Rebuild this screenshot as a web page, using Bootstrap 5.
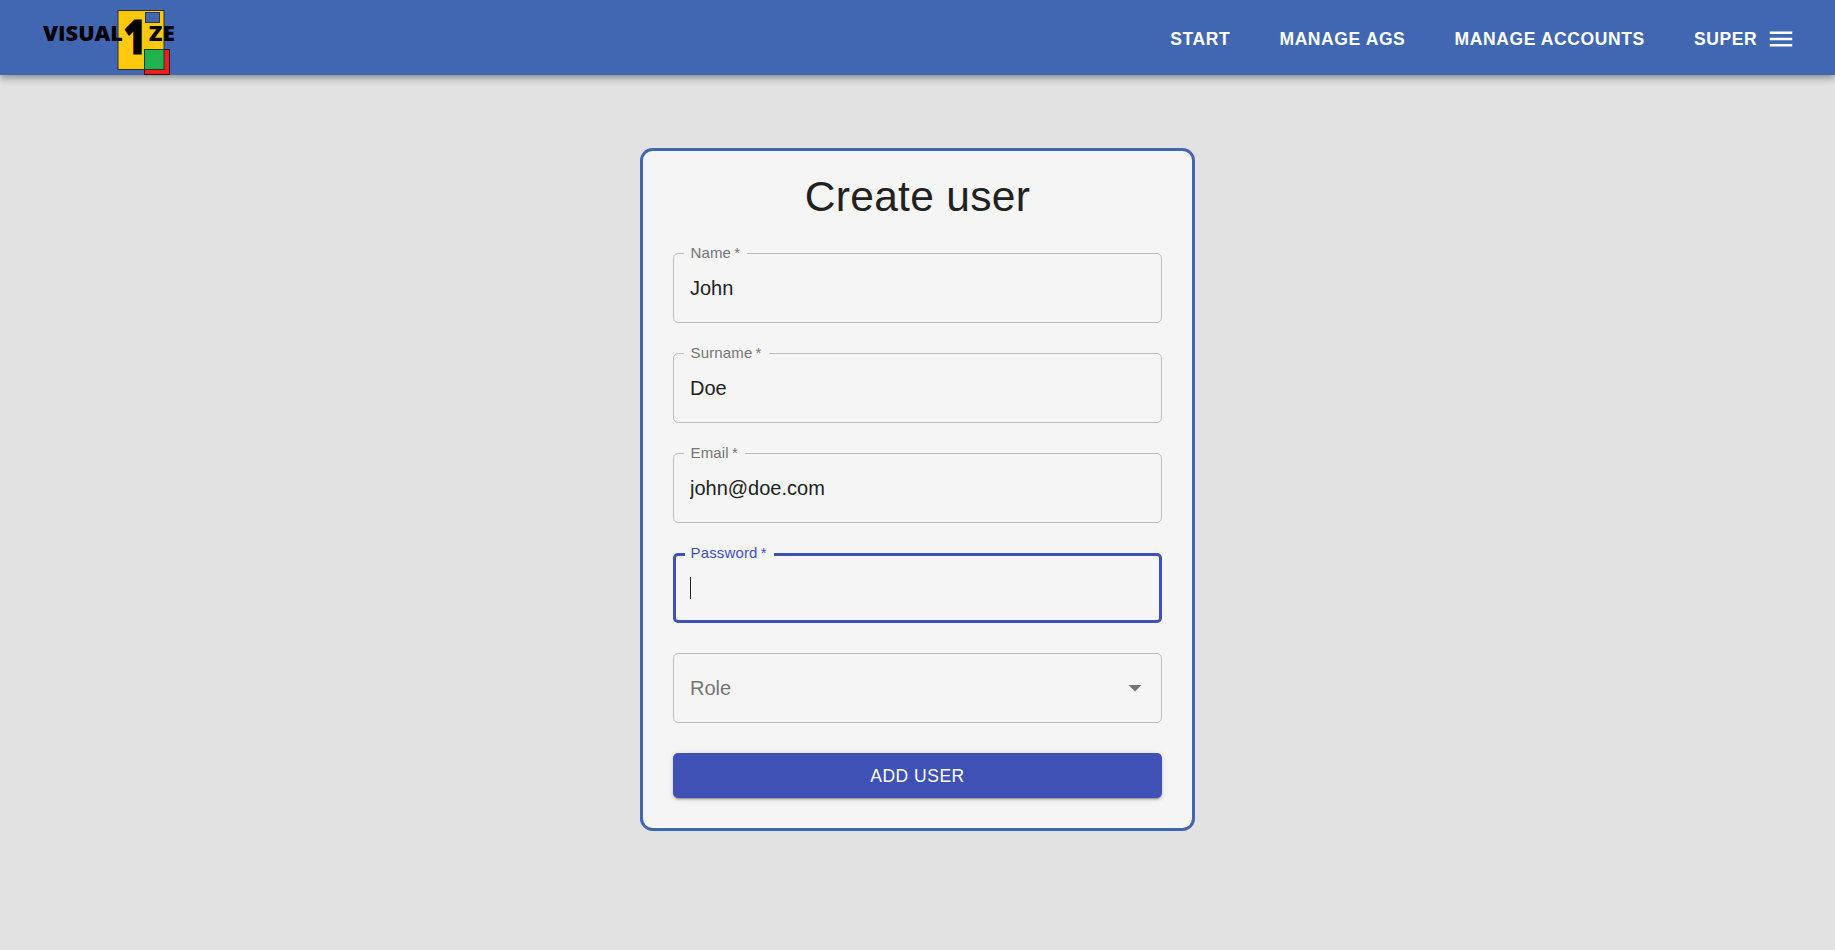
<!DOCTYPE html>
<html lang="en">
<head>
<meta charset="utf-8">
<title>Create user</title>
<link href="https://cdn.jsdelivr.net/npm/bootstrap@5.3.0/dist/css/bootstrap.min.css" rel="stylesheet">
<style>
body{background:#e2e2e2;font-family:"Liberation Sans",Arial,sans-serif;color:#212121;min-height:100vh}
.topbar{height:75px;background:#4267b2;padding:0 39px 0 40px;box-shadow:0 2.5px 5px -1px rgba(0,0,0,.2),0 5px 6px rgba(0,0,0,.14),0 1px 12px rgba(0,0,0,.12)}
.topbar .nav-link{color:#fff;font-weight:700;font-size:17.5px;line-height:30px;letter-spacing:.6px;padding:0;margin-top:2px}
.menu-links{gap:49.2px}
.user-menu{gap:8.8px}
.user-menu svg{margin-top:3px}
.panel{width:555px;height:683px;margin-top:73px;border:3px solid #4267b2;border-radius:12.5px;background:#f5f5f5;padding:20px 30px 30px}
.panel h1{font-size:42.5px;line-height:52px;letter-spacing:.31px;margin:0 0 30px;font-weight:400}
.field{height:70px;border:1px solid #bcbcbc;border-radius:5px;padding:0 16px;font-size:20px;margin-bottom:30px}
.field label{left:10px;top:-12px;padding:0 7px 0 6.5px;font-size:15px;line-height:22px;letter-spacing:.15px;color:#757575;background:#f5f5f5;white-space:pre}
.field input{border:0;outline:0;background:none;padding:0;width:100%;color:#212121;font-size:20px;line-height:24px}
.field.active{border:3px solid #3f51b5;padding:0 14px}
.field.active label{color:#3f51b5;left:9px;top:-14px;padding-left:5.5px}
.caret{width:1px;height:22px;background:#212121}
.role{color:#757575}
.btn-add{height:45px;background:#3f51b5;color:#fff;border:0;border-radius:5px;font-size:17.5px;line-height:30px;letter-spacing:.5px;padding:1px 0 0;box-shadow:0 3px 1px -2px rgba(0,0,0,.2),0 2px 2px rgba(0,0,0,.14),0 1px 6px rgba(0,0,0,.12)}
</style>
</head>
<body>
<header class="topbar d-flex align-items-center justify-content-between">
  <a href="#" class="d-block" aria-label="Visual1ze">
    <svg class="d-block" width="140" height="75" viewBox="40 0 140 75" font-family="'Open Sans',sans-serif" font-weight="800">
      <rect x="118" y="10.5" width="46" height="59" fill="#ffc90e" stroke="#2d2d2d"/>
      <rect x="145.5" y="12.5" width="14" height="10" fill="#4267b2" stroke="#2d3a55"/>
      <rect x="144.5" y="49.5" width="25" height="25" fill="#ed1c24" stroke="#2d1010"/>
      <rect x="144.5" y="49.5" width="19.5" height="20" fill="#22b14c" stroke="#1c3a1c"/>
      <text x="43" y="41.3" font-size="21" textLength="80" lengthAdjust="spacingAndGlyphs">VISUAL</text>
      <text x="123.5" y="54.3" font-size="47.5" stroke="#000" stroke-width="1" textLength="22.5" lengthAdjust="spacingAndGlyphs">1</text>
      <text x="148.7" y="41.3" font-size="21" textLength="26" lengthAdjust="spacingAndGlyphs">ZE</text>
    </svg>
  </a>
  <nav class="menu-links d-flex align-items-center">
    <a class="nav-link" href="#">START</a>
    <a class="nav-link" href="#">MANAGE AGS</a>
    <a class="nav-link" href="#">MANAGE ACCOUNTS</a>
    <div class="user-menu d-flex align-items-center">
      <a class="nav-link" href="#">SUPER</a>
      <svg width="30" height="30" viewBox="0 0 24 24" fill="#fff"><path d="M3 18h18v-2H3v2zm0-5h18v-2H3v2zm0-7v2h18V6H3z"/></svg>
    </div>
  </nav>
</header>
<main class="panel mx-auto">
  <h1 class="text-center">Create user</h1>
  <form>
    <div class="field position-relative d-flex align-items-center"><label for="n" class="position-absolute">Name&#8201;*</label><input id="n" value="John"></div>
    <div class="field position-relative d-flex align-items-center"><label for="s" class="position-absolute">Surname&#8201;*</label><input id="s" value="Doe"></div>
    <div class="field position-relative d-flex align-items-center"><label for="e" class="position-absolute">Email&#8201;*</label><input id="e" value="john@doe.com"></div>
    <div class="field active position-relative d-flex align-items-center"><label class="position-absolute">Password&#8201;*</label><span class="caret"></span></div>
    <div class="field role d-flex align-items-center justify-content-between"><span>Role</span>
      <svg width="20" height="10" viewBox="0 0 20 10" fill="#757575"><path d="M3.5 2h13L10 8.5z"/></svg></div>
    <button type="button" class="btn btn-add w-100">ADD USER</button>
  </form>
</main>
<script src="https://cdn.jsdelivr.net/npm/bootstrap@5.3.0/dist/js/bootstrap.bundle.min.js"></script>
</body>
</html>
